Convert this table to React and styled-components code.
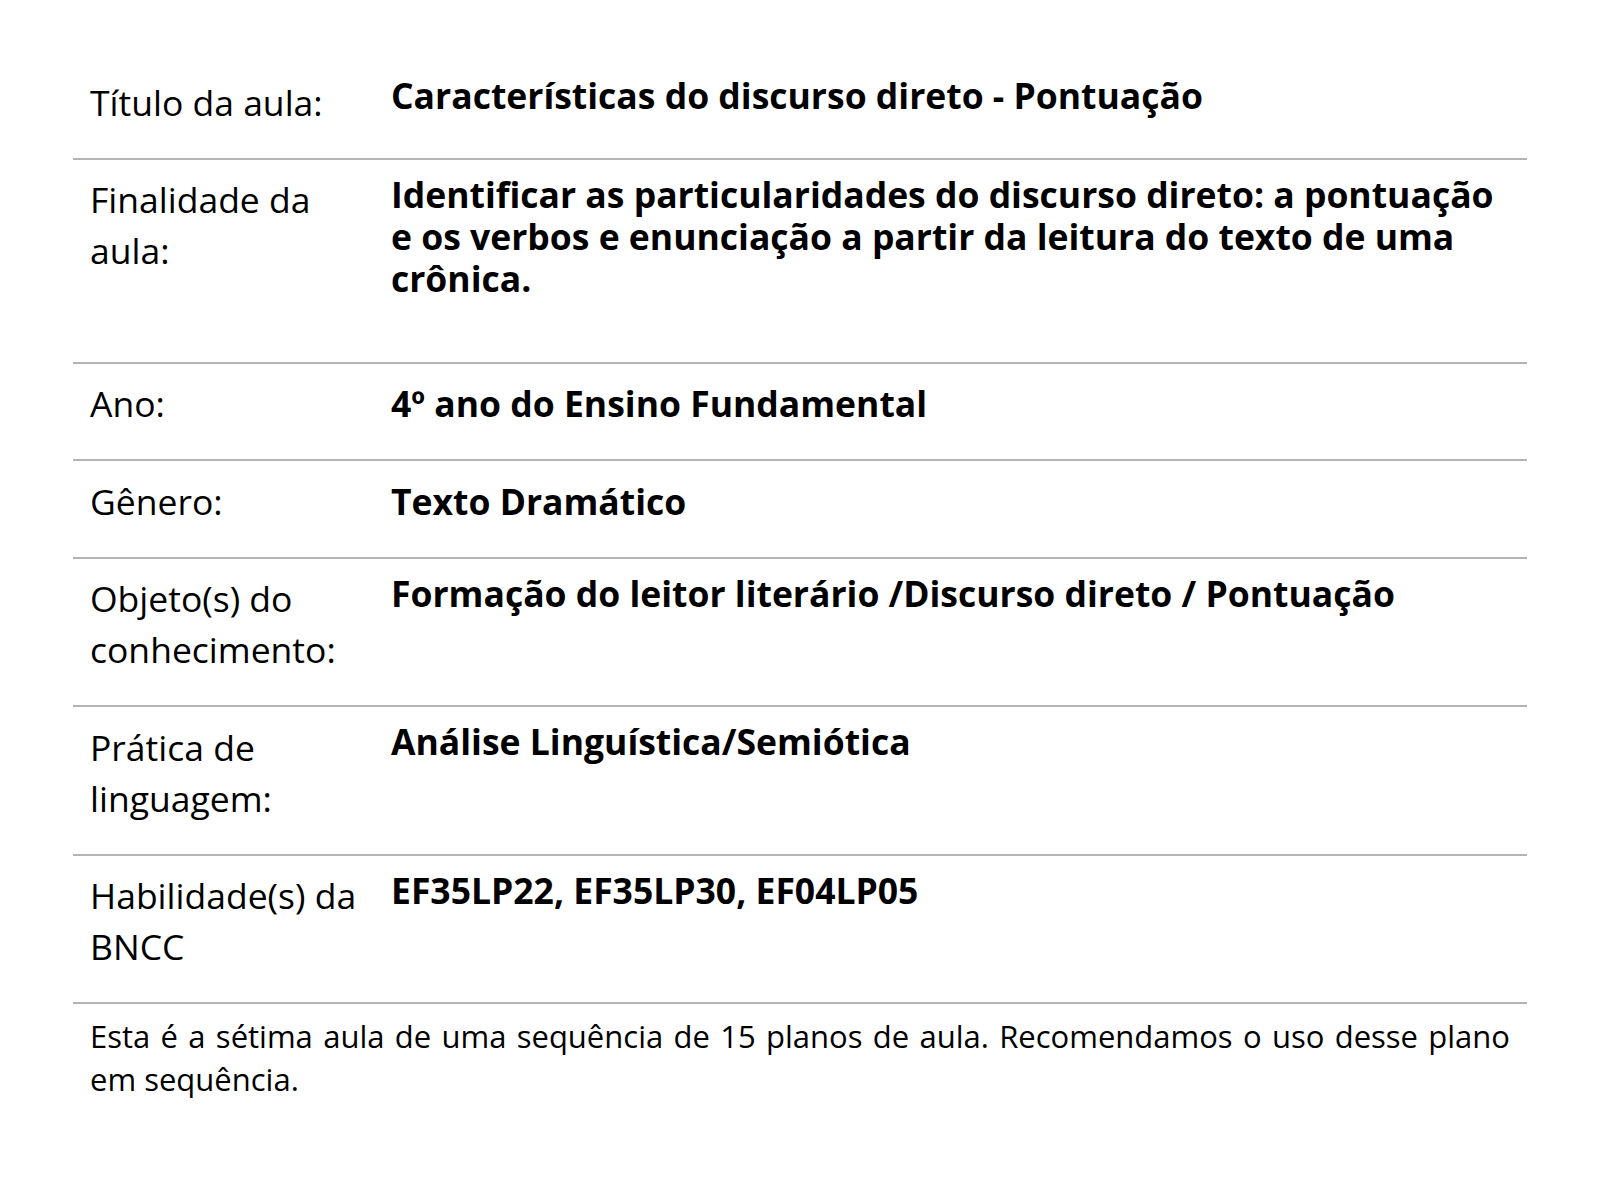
import styled, { createGlobalStyle } from 'styled-components';

const GlobalStyle = createGlobalStyle`
	body {
		margin: 0;
		background: #fff;
		color: #000;
		font-family: 'Open Sans', 'Noto Sans', sans-serif;
	}
`;

const Page = styled.div`
	padding: 62px 0 80px 73px;
`;

const Table = styled.div`
	width: 1454px;
	display: flex;
	flex-direction: column;
`;

const Row = styled.div`
	display: grid;
	grid-template-columns: 301px 1fr;
	border-bottom: 2px solid #b4b4b4;
`;

const Label = styled.div`
	padding: 14.5px 17px 30px;
	font-size: 35.5px;
	line-height: 51px;
	font-weight: 400;
`;

const Value = styled.div`
	padding: ${({ $top }) => $top || 13}px 17px ${({ $extra }) => 27 + ($extra || 0)}px;
	font-size: 35.5px;
	line-height: 42px;
	font-weight: 700;
`;

const Note = styled.p`
	margin: 0;
	padding: 11px 17px;
	font-size: 31px;
	line-height: 43px;
	text-align: justify;
`;

const rows = [
	{ label: 'Título da aula:', value: 'Características do discurso direto - Pontuação', top: 12 },
	{
		label: 'Finalidade da aula:',
		value:
			'Identificar as particularidades do discurso direto: a pontuação e os verbos e enunciação a partir da leitura do texto de uma crônica.',
		extra: 36,
	},
	{ label: 'Ano:', value: '4º ano do Ensino Fundamental', top: 18.5 },
	{ label: 'Gênero:', value: 'Texto Dramático', top: 18.5 },
	{ label: 'Objeto(s) do conhecimento:', value: 'Formação do leitor literário /Discurso direto / Pontuação' },
	{ label: 'Prática de linguagem:', value: 'Análise Linguística/Semiótica' },
	{ label: 'Habilidade(s) da BNCC', value: 'EF35LP22, EF35LP30, EF04LP05' },
];

export default function App() {
	return (
		<>
			<GlobalStyle />
			<Page>
				<Table>
					{rows.map((row) => (
						<Row key={row.label}>
							<Label>{row.label}</Label>
							<Value $top={row.top} $extra={row.extra}>
								{row.value}
							</Value>
						</Row>
					))}
					<Note>
						Esta é a sétima aula de uma sequência de 15 planos de aula. Recomendamos o uso desse plano
						em sequência.
					</Note>
				</Table>
			</Page>
		</>
	);
}
